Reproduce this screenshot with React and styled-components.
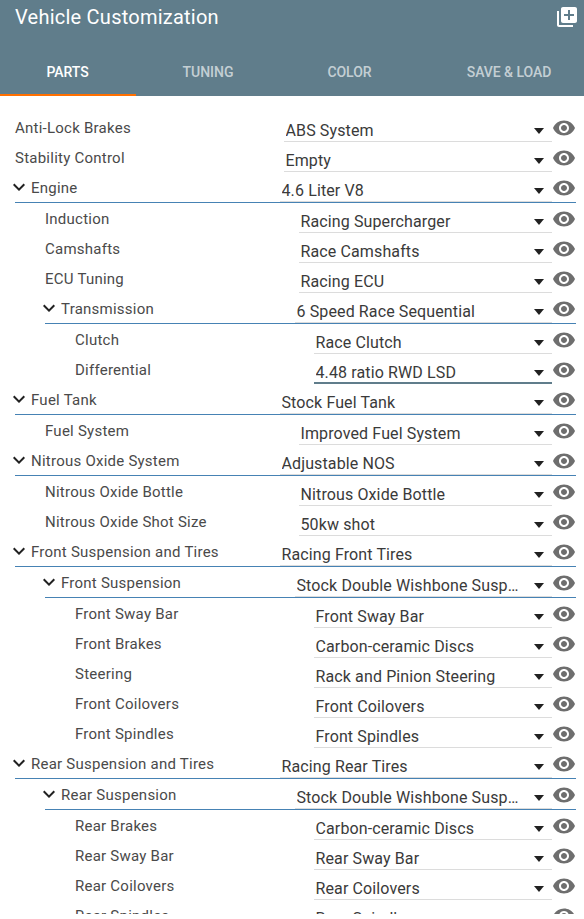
import React from 'react';
import styled, { createGlobalStyle } from 'styled-components';
import { MdExpandMore, MdLibraryAdd, MdVisibility } from 'react-icons/md';

const GlobalStyle = createGlobalStyle`
    body {
        margin: 0;
        background-color: #ffffff;
        font-family: Roboto, "Liberation Sans", sans-serif;
    }
`

const Container = styled.div`
    height: 914px;
    overflow: hidden;
`

const Header = styled.header`
    height: 96px;
    display: flex;
    flex-direction: column;
    justify-content: space-between;
    overflow: hidden;
    background-color: #607d8b;
    color: #ffffff;
`

const TitleBar = styled.div`
    display: flex;
    justify-content: space-between;
    padding: 5px 5px 0 15px;
`

const Title = styled.h1`
    margin: 0;
    font-size: 20px;
    font-weight: 400;
    line-height: 24px;
    letter-spacing: 0.24px;
`

const IconButton = styled.button`
    display: flex;
    flex: none;
    padding: 0;
    border: none;
    background: none;
    color: inherit;
    cursor: pointer;
`

const Tabs = styled.nav`
    display: flex;
    height: 48px;
`

const Tab = styled.a`
    flex: none;
    box-sizing: border-box;
    width: ${props => props.$width}px;
    padding-right: 1px;
    border-bottom: 2px solid ${props => props.$active ? '#ff6f00' : 'transparent'};
    color: ${props => props.$active ? '#ffffff' : 'rgba(255, 255, 255, 0.65)'};
    font-size: 14px;
    font-weight: 500;
    line-height: 48px;
    letter-spacing: -0.05px;
    text-align: center;
    text-transform: uppercase;
    white-space: nowrap;
    cursor: pointer;
`

const List = styled.div`
    padding: 16px 8px 0 15px;
`

const Children = styled.div`
    padding-left: 30px;
`

const Row = styled.div`
    display: flex;
    height: 30px;
    border-bottom: ${props => props.$group ? '1px solid #4682b4' : 'none'};
`

const Chevron = styled(MdExpandMore)`
    flex: none;
    margin: 3px 0 0 -8px;
    color: #212121;
    font-size: 24px;
`

const Label = styled.div`
    flex: 1;
    color: #4a4a4a;
    font-size: 15px;
    line-height: 32px;
    letter-spacing: 0.24px;
    white-space: nowrap;
`

const Select = styled.div`
    flex: none;
    box-sizing: border-box;
    display: flex;
    width: ${props => props.$width}px;
    height: 30px;
    padding: 0 8px 0 1.5px;
    border-bottom: ${props => props.$focused ? '2px solid #607d8b' : '1px solid #dcdcdc'};
    cursor: pointer;
`

const Value = styled.span`
    flex: 1;
    margin-right: 15px;
    overflow: hidden;
    color: #3a3a3a;
    font-size: 16px;
    line-height: 38px;
    letter-spacing: 0.12px;
    text-overflow: ellipsis;
    white-space: nowrap;
`

const Arrow = styled.span`
    margin-top: 16px;
    width: 0;
    height: 0;
    border-left: 5px solid transparent;
    border-right: 5px solid transparent;
    border-top: 6px solid #212121;
`

const Eye = styled(MdVisibility)`
    flex: none;
    margin-top: 4px;
    color: #6e6e6e;
    font-size: 24px;
`

const tabs = [
  { name: 'Parts', width: 136 },
  { name: 'Tuning', width: 145 },
  { name: 'Color', width: 138 },
  { name: 'Save & Load', width: 181 },
]

const parts = [
  { label: 'Anti-Lock Brakes', value: 'ABS System' },
  { label: 'Stability Control', value: 'Empty' },
  { label: 'Engine', value: '4.6 Liter V8', items: [
    { label: 'Induction', value: 'Racing Supercharger' },
    { label: 'Camshafts', value: 'Race Camshafts' },
    { label: 'ECU Tuning', value: 'Racing ECU' },
    { label: 'Transmission', value: '6 Speed Race Sequential', items: [
      { label: 'Clutch', value: 'Race Clutch' },
      { label: 'Differential', value: '4.48 ratio RWD LSD', focused: true },
    ] },
  ] },
  { label: 'Fuel Tank', value: 'Stock Fuel Tank', items: [
    { label: 'Fuel System', value: 'Improved Fuel System' },
  ] },
  { label: 'Nitrous Oxide System', value: 'Adjustable NOS', items: [
    { label: 'Nitrous Oxide Bottle', value: 'Nitrous Oxide Bottle' },
    { label: 'Nitrous Oxide Shot Size', value: '50kw shot' },
  ] },
  { label: 'Front Suspension and Tires', value: 'Racing Front Tires', items: [
    { label: 'Front Suspension', value: 'Stock Double Wishbone Suspension', items: [
      { label: 'Front Sway Bar', value: 'Front Sway Bar' },
      { label: 'Front Brakes', value: 'Carbon-ceramic Discs' },
      { label: 'Steering', value: 'Rack and Pinion Steering' },
      { label: 'Front Coilovers', value: 'Front Coilovers' },
      { label: 'Front Spindles', value: 'Front Spindles' },
    ] },
  ] },
  { label: 'Rear Suspension and Tires', value: 'Racing Rear Tires', items: [
    { label: 'Rear Suspension', value: 'Stock Double Wishbone Suspension', items: [
      { label: 'Rear Brakes', value: 'Carbon-ceramic Discs' },
      { label: 'Rear Sway Bar', value: 'Rear Sway Bar' },
      { label: 'Rear Coilovers', value: 'Rear Coilovers' },
      { label: 'Rear Spindles', value: 'Rear Spindles' },
    ] },
  ] },
]

const Part = ({ part, depth }) => {
  const group = Boolean(part.items)
  return (
    <>
      <Row $group={group}>
        {group && <Chevron />}
        <Label>{part.label}</Label>
        <Select $width={(group ? 272 : 268) - depth * 15} $focused={part.focused}>
          <Value>{part.value}</Value>
          <Arrow />
        </Select>
        <Eye />
      </Row>
      {group && (
        <Children>
          {part.items.map(item => <Part key={item.label} part={item} depth={depth + 1} />)}
        </Children>
      )}
    </>
  )
}

const App = () => {
  return (
    <Container>
      <GlobalStyle />
      <Header>
        <TitleBar>
          <Title>Vehicle Customization</Title>
          <IconButton aria-label="Add"><MdLibraryAdd size={24} /></IconButton>
        </TitleBar>
        <Tabs>
          {tabs.map((tab, i) => <Tab key={tab.name} $width={tab.width} $active={i === 0}>{tab.name}</Tab>)}
        </Tabs>
      </Header>
      <List>
        {parts.map(part => <Part key={part.label} part={part} depth={0} />)}
      </List>
    </Container>
  )
}

export default App
